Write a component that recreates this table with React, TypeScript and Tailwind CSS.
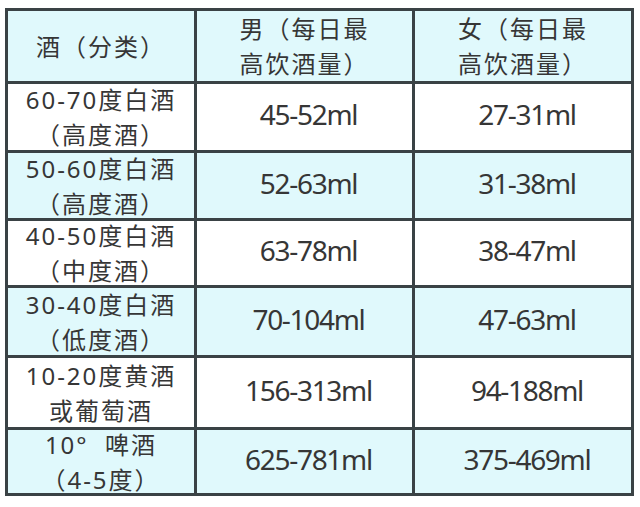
import React from "react";

const cyan = "bg-[#e0f9fc]";
const white = "bg-white";

type Row = { a: string[]; m: string; f: string; bg: string; h: string };

const rows: Row[] = [
  { a: ["60-70度白酒", "（高度酒）"], m: "45-52ml", f: "27-31ml", bg: white, h: "h-[66px]" },
  { a: ["50-60度白酒", "（高度酒）"], m: "52-63ml", f: "31-38ml", bg: cyan, h: "h-[65px]" },
  { a: ["40-50度白酒", "（中度酒）"], m: "63-78ml", f: "38-47ml", bg: white, h: "h-[64px]" },
  { a: ["30-40度白酒", "（低度酒）"], m: "70-104ml", f: "47-63ml", bg: cyan, h: "h-[67px]" },
  { a: ["10-20度黄酒", "或葡萄酒"], m: "156-313ml", f: "94-188ml", bg: white, h: "h-[69px]" },
  { a: ["10°  啤酒", "（4-5度）"], m: "625-781ml", f: "375-469ml", bg: cyan, h: "h-[63px]" },
];

const font = { fontFamily: '"Noto Sans", "Noto Sans CJK SC", sans-serif' };

export default function App() {
  return (
    <div className="w-[640px] h-[507px] bg-white pt-[8px] pl-[5px]" style={font}>
      <div className="w-[629px] border-[3px] border-[#3a4245] bg-[#3a4245] grid grid-cols-[186px_215px_216px] gap-[3px] text-[#363636]">
        <div className={`${cyan} h-[70px] flex items-center justify-center text-[24px] tracking-[2px] leading-[35px]`}>
          酒（分类）
        </div>
        <div className={`${cyan} h-[70px] flex flex-col items-center justify-center text-[24px] tracking-[2px] leading-[35px]`}>
          <span>男（每日最</span>
          <span>高饮酒量）</span>
        </div>
        <div className={`${cyan} h-[70px] flex flex-col items-center justify-center text-[24px] tracking-[2px] leading-[35px]`}>
          <span>女（每日最</span>
          <span>高饮酒量）</span>
        </div>
        {rows.map((r, i) => (
          <React.Fragment key={i}>
            <div className={`${r.bg} ${r.h} flex flex-col items-center justify-center text-[24px] tracking-[2px] leading-[35px] whitespace-pre`}>
              <span>{r.a[0]}</span>
              <span>{r.a[1]}</span>
            </div>
            <div className={`${r.bg} ${r.h} flex items-center justify-center pl-[8px] pb-[6px] text-[28px] tracking-[-1.3px]`}>
              {r.m}
            </div>
            <div className={`${r.bg} ${r.h} flex items-center justify-center pl-[8px] pb-[6px] text-[28px] tracking-[-1.3px]`}>
              {r.f}
            </div>
          </React.Fragment>
        ))}
      </div>
    </div>
  );
}
